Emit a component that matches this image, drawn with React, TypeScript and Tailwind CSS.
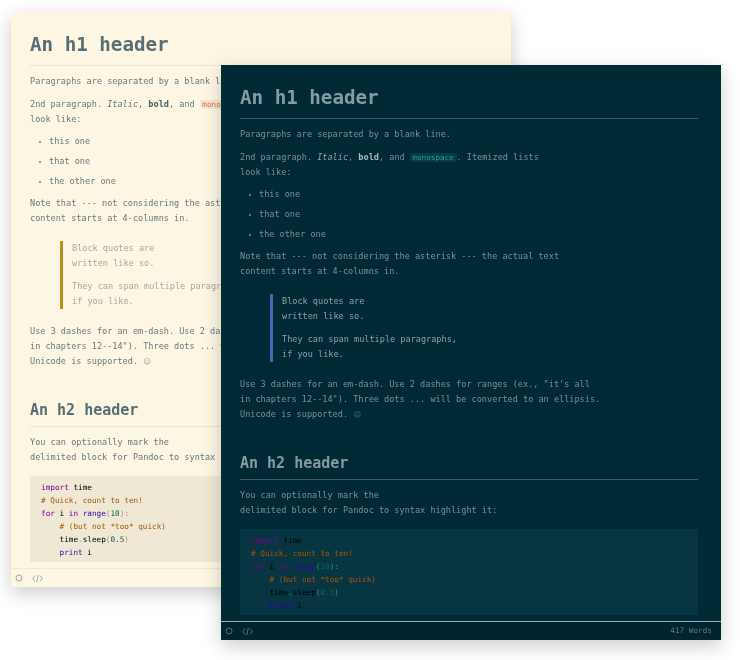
const FONT = "font-['DejaVu_Sans_Mono','Liberation_Mono',monospace]";

type Theme = "light" | "dark";

function Kw({ children }: { children: React.ReactNode }) {
  return <span className="text-[#770088]">{children}</span>;
}
function Bi({ children }: { children: React.ReactNode }) {
  return <span className="text-[#3300aa]">{children}</span>;
}
function Cm({ children }: { children: React.ReactNode }) {
  return <span className="text-[#aa5500]">{children}</span>;
}
function Nm({ children }: { children: React.ReactNode }) {
  return <span className="text-[#116644]">{children}</span>;
}

function CodeLines({ dark }: { dark: boolean }) {
  const p = dark ? "text-[#1f9c90]" : "text-[#c08a5a]";
  return (
    <pre className={`${FONT} text-[7.7px] leading-[13px] text-[#000000]`}>
      <Kw>import</Kw> time{"\n"}
      <Cm># Quick, count to ten!</Cm>{"\n"}
      <Kw>for</Kw> i <Kw>in</Kw> <Bi>range</Bi><span className={p}>(</span><Nm>10</Nm><span className={p}>):</span>{"\n"}
      {"    "}<Cm># (but not *too* quick)</Cm>{"\n"}
      {"    "}time<span className={p}>.</span>sleep<span className={p}>(</span><Nm>0.5</Nm><span className={p}>)</span>{"\n"}
      {"    "}<Bi>print</Bi> i
    </pre>
  );
}

function EditorWindow({ theme, className }: { theme: Theme; className: string }) {
  const dark = theme === "dark";
  const body = dark ? "bg-[#002b36] text-[#788f95]" : "bg-[#fdf6e3] text-[#657b83]";
  const head = dark ? "text-[#869ba0]" : "text-[#586e75]";
  const rule = dark ? "border-[#3e5c64]" : "border-[#ece5d3]";
  const strong = dark ? "text-[#a9bcbf]" : "text-[#47606a]";
  const em = dark ? "text-[#8fa2a6]" : "text-[#607880]";
  const quote = dark ? "text-[#8aa0a5]" : "text-[#a0aaa6]";
  const quoteBar = dark ? "bg-[#4f64b4]" : "bg-[#b8901a]";
  const inline = dark ? "bg-[#073b44] text-[#1f9c90]" : "bg-[#f8e5d2] text-[#d2785c]";
  const codeBg = dark ? "bg-[#073642]" : "bg-[#eee8d5]";
  const footer = dark
    ? "bg-[#00252f] border-[#9db2b6] text-[#5d7980]"
    : "bg-[#fdf6e3] border-[#eee8d5] text-[#93a1a1]";

  return (
    <div className={`absolute flex h-[575px] w-[500px] flex-col overflow-hidden shadow-[0_6px_18px_rgba(0,0,0,0.2)] ${body} ${FONT} ${className}`}>
      <div className="min-h-0 flex-1 overflow-hidden pl-[19px] pr-[23px] pt-[20px] text-[8.55px] leading-[15px]">
        <h1 className={`border-b pb-[7px] text-[19.2px] font-bold leading-[26px] ${head} ${rule}`}>An h1 header</h1>
        <p className="mt-[8px]">Paragraphs are separated by a blank line.</p>
        <p className="mt-[8px]">
          2nd paragraph. <em className={em}>Italic</em>, <strong className={strong}>bold</strong>, and{" "}
          <code className={`${FONT} rounded-[2px] px-[2.5px] text-[7.7px] ${inline}`}>monospace</code>. Itemized lists
          <br />
          look like:
        </p>
        <ul className="mt-[7px] flex flex-col gap-[5px] pl-[19px]">
          {["this one", "that one", "the other one"].map((t) => (
            <li key={t} className="relative">
              <span className="absolute left-[-10px] top-[7px] h-[2px] w-[2px] rounded-full bg-current" />
              {t}
            </li>
          ))}
        </ul>
        <p className="mt-[7px]">
          Note that --- not considering the asterisk --- the actual text
          <br />
          content starts at 4-columns in.
        </p>
        <blockquote className={`relative ml-[30px] mt-[15px] pl-[12px] ${quote}`}>
          <span className={`absolute bottom-0 left-0 top-0 w-[3px] ${quoteBar}`} />
          <p>
            Block quotes are
            <br />
            written like so.
          </p>
          <p className="mt-[8px]">
            They can span multiple paragraphs,
            <br />
            if you like.
          </p>
        </blockquote>
        <p className="mt-[15px]">
          Use 3 dashes for an em-dash. Use 2 dashes for ranges (ex., "it's all
          <br />
          in chapters 12--14"). Three dots ... will be converted to an ellipsis.
          <br />
          Unicode is supported. <span className="font-['DejaVu_Sans',sans-serif] text-[7.5px] opacity-70">☺</span>
        </p>
        <h2 className={`mt-[30px] border-b pb-[5px] text-[15px] font-bold leading-[22px] ${head} ${rule}`}>An h2 header</h2>
        <p className="mt-[8px]">
          You can optionally mark the
          <br />
          delimited block for Pandoc to syntax highlight it:
        </p>
        <div className={`mt-[11px] h-[86px] overflow-hidden pl-[11px] pt-[5px] ${codeBg}`}>
          <CodeLines dark={dark} />
        </div>
      </div>
      <div className={`flex h-[19px] shrink-0 items-center border-t pl-[4px] pr-[9px] text-[7.7px] ${footer}`}>
        <svg width="8" height="8" viewBox="0 0 8 8" fill="none" stroke="currentColor" strokeWidth="0.9">
          <circle cx="4" cy="4" r="3" />
        </svg>
        <svg className="ml-[9px]" width="11" height="9" viewBox="0 0 11 9" fill="none" stroke="currentColor" strokeWidth="0.9">
          <path d="M3 1.5 0.8 4.5 3 7.5M8 1.5 10.2 4.5 8 7.5M6.3 1 4.7 8" />
        </svg>
        <span className="ml-auto">{dark ? "417 Words" : ""}</span>
      </div>
    </div>
  );
}

export default function App() {
  return (
    <div className="relative h-[660px] w-[740px] overflow-hidden bg-white blur-[0.35px]">
      <EditorWindow theme="light" className="left-[11px] top-[12px]" />
      <EditorWindow theme="dark" className="left-[221px] top-[65px]" />
    </div>
  );
}
